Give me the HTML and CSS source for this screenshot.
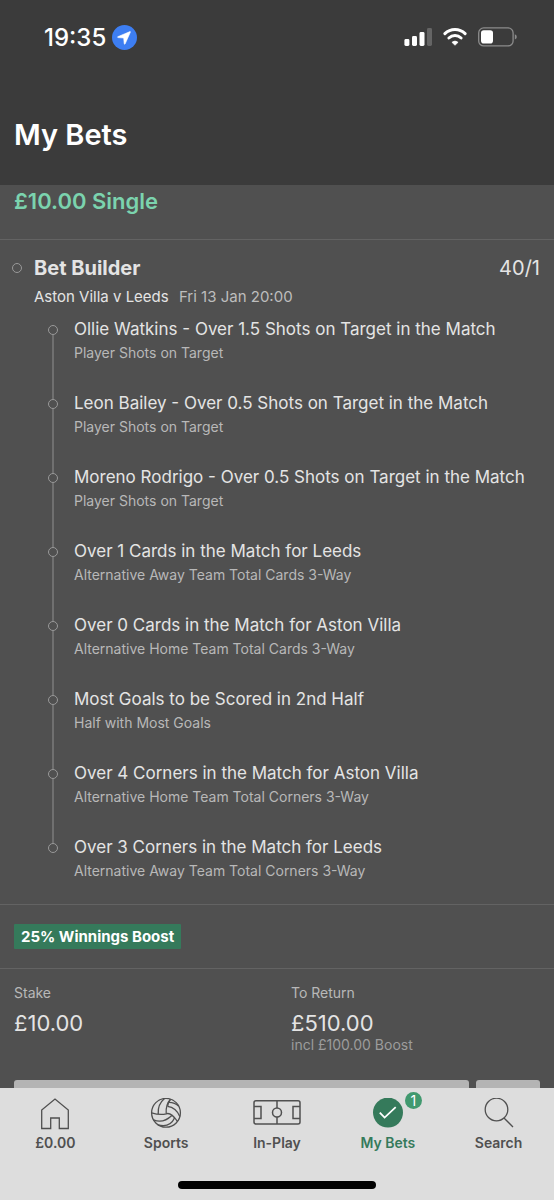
FILE: index.html
```html
<!DOCTYPE html>
<html lang="en">
<head>
    <meta charset="UTF-8">
    <meta name="viewport" content="width=device-width, initial-scale=1.0">
    <title>My Bets</title>
    <link rel="stylesheet" href="styles.css">
</head>
<body>
    <header class="header">
        <div class="status-bar">
            <div class="status-left">
                <span class="clock">19:35</span>
                <svg class="location" width="25" height="25" viewBox="0 0 25 25">
                    <circle cx="12.5" cy="12.5" r="12.5" fill="#3d7ef2"/>
                    <path d="M18 6.6 L5.8 11.7 Q5.2 12.3 6 12.6 L11.7 13 L12.2 18.8 Q12.6 19.6 13.1 18.9 L18.4 7.1 Q18.5 6.5 18 6.6 Z" fill="#fff" stroke="#fff" stroke-width="0.6"/>
                </svg>
            </div>
            <div class="status-right">
                <svg width="28" height="18" viewBox="0 0 28 18" fill="#fff">
                    <rect x="0.4" y="11" width="5" height="7" rx="1.4"/>
                    <rect x="8" y="8" width="5" height="10" rx="1.4"/>
                    <rect x="15.500" y="4" width="5" height="14" rx="1.4"/>
                    <rect x="23" y="0" width="5" height="18" rx="1.4" fill="#656565"/>
                </svg>
                <svg width="24" height="18" viewBox="0 0 24 18">
                    <path d="M1.9 5.600 A14.500 14.500 0 0 1 22.1 5.600" fill="none" stroke="#fff" stroke-width="3" stroke-linecap="round"/>
                    <path d="M5.900 10 A9 9 0 0 1 18.100 10" fill="none" stroke="#fff" stroke-width="3" stroke-linecap="round"/>
                    <path d="M12 17.300 L8.900 14.300 A4.800 4.800 0 0 1 15.100 14.300 Z" fill="#fff" stroke="#fff" stroke-width="0.600" stroke-linejoin="round"/>
                </svg>
                <svg width="39" height="20" viewBox="0 0 39 20">
                    <rect x="0.7" y="0.9" width="34.4" height="18" rx="5" fill="none" stroke="#8c8c8c" stroke-width="1.3"/>
                    <path d="M36.8 7.2 Q38.8 8 38.8 9.9 Q38.8 11.8 36.8 12.6 Z" fill="#8c8c8c"/>
                    <rect x="3" y="3.3" width="12" height="13.2" rx="2.8" fill="#fff"/>
                </svg>
            </div>
        </div>
        <h1 class="page-title">My Bets</h1>
    </header>

    <main class="content">
        <h2 class="bet-type">£10.00 Single</h2>

        <section class="selection">
            <div class="selection-head">
                <span class="marker"></span>
                <h3 class="selection-name">Bet Builder</h3>
                <span class="odds">40/1</span>
            </div>
            <p class="fixture">Aston Villa v Leeds <span class="kickoff">Fri 13 Jan 20:00</span></p>
            <ul class="legs">
                <li class="leg">
                    <p class="leg-name">Ollie Watkins - Over 1.5 Shots on Target in the Match</p>
                    <p class="leg-market">Player Shots on Target</p>
                </li>
                <li class="leg">
                    <p class="leg-name">Leon Bailey - Over 0.5 Shots on Target in the Match</p>
                    <p class="leg-market">Player Shots on Target</p>
                </li>
                <li class="leg">
                    <p class="leg-name">Moreno Rodrigo - Over 0.5 Shots on Target in the Match</p>
                    <p class="leg-market">Player Shots on Target</p>
                </li>
                <li class="leg">
                    <p class="leg-name">Over 1 Cards in the Match for Leeds</p>
                    <p class="leg-market">Alternative Away Team Total Cards 3-Way</p>
                </li>
                <li class="leg">
                    <p class="leg-name">Over 0 Cards in the Match for Aston Villa</p>
                    <p class="leg-market">Alternative Home Team Total Cards 3-Way</p>
                </li>
                <li class="leg">
                    <p class="leg-name">Most Goals to be Scored in 2nd Half</p>
                    <p class="leg-market">Half with Most Goals</p>
                </li>
                <li class="leg">
                    <p class="leg-name">Over 4 Corners in the Match for Aston Villa</p>
                    <p class="leg-market">Alternative Home Team Total Corners 3-Way</p>
                </li>
                <li class="leg">
                    <p class="leg-name">Over 3 Corners in the Match for Leeds</p>
                    <p class="leg-market">Alternative Away Team Total Corners 3-Way</p>
                </li>
            </ul>
        </section>

        <section class="boost">
            <span class="boost-badge">25% Winnings Boost</span>
        </section>

        <section class="totals">
            <div class="total">
                <p class="total-label">Stake</p>
                <p class="total-value">£10.00</p>
            </div>
            <div class="total">
                <p class="total-label">To Return</p>
                <p class="total-value">£510.00</p>
                <p class="total-note">incl £100.00 Boost</p>
            </div>
        </section>

        <div class="actions">
            <button type="button" class="action action-main" aria-label="Cash out"></button>
            <button type="button" class="action action-side" aria-label="Options"></button>
        </div>
    </main>

    <footer class="footer">
        <nav class="nav">
            <a class="nav-item" href="#">
                <svg class="nav-icon" width="32" height="32" viewBox="0 0 32 32" fill="none" stroke="#505050" stroke-width="1.3">
                    <path d="M2.7 30.500 V12 L16 1 L29.3 12 V30.500 H20.3 V20 H11.7 V30.500 Z"/>
                </svg>
                <span>£0.00</span>
            </a>
            <a class="nav-item" href="#">
                <svg class="nav-icon" width="32" height="32" viewBox="0 0 32 32" fill="none" stroke="#505050" stroke-width="1.3">
                    <circle cx="16" cy="14.800" r="14.4"/>
                    <path d="M16.200 15.800 Q15.500 6.500 20.500 1.200"/>
                    <path d="M8.200 16 Q7.500 6.500 14.500 0.600"/>
                    <path d="M1.600 14.800 Q10 17.500 16.200 15.800 Q21 14 27.500 23.500"/>
                    <path d="M17.600 8.400 Q26 9.500 29.800 18.500"/>
                    <path d="M20.500 1.200 Q18 4.500 17.600 8.400"/>
                    <path d="M19 4.300 Q25 4.500 28.500 8"/>
                    <path d="M3.500 21.800 Q13 26 21.800 17.500"/>
                    <path d="M8 26.800 Q20 30 24.500 20"/>
                </svg>
                <span>Sports</span>
            </a>
            <a class="nav-item" href="#">
                <svg class="nav-icon" width="48" height="32" viewBox="0 0 48 32" fill="none" stroke="#505050" stroke-width="1.5">
                    <rect x="1" y="2.800" width="46" height="23.300" rx="2"/>
                    <path d="M1 8.600 H8 V20.500 H1 M47 8.600 H40 V20.500 H47 M24 2.800 V10 M24 19 V26"/>
                    <circle cx="24" cy="14.500" r="4.500"/>
                </svg>
                <span>In-Play</span>
            </a>
            <a class="nav-item nav-item-active" href="#">
                <svg class="nav-icon" width="32" height="32" viewBox="0 0 32 32" fill="none">
                    <circle cx="16" cy="14.600" r="15" fill="#357a5b"/>
                    <path d="M7.800 14.600 L12.600 19.600 L23.700 9.200" stroke="#fff" stroke-width="1.800"/>
                </svg>
                <span class="nav-count">1</span>
                <span>My Bets</span>
            </a>
            <a class="nav-item" href="#">
                <svg class="nav-icon" width="32" height="32" viewBox="0 0 32 32" fill="none" stroke="#505050" stroke-width="1.3">
                    <circle cx="13.500" cy="11.500" r="11.300"/>
                    <path d="M21 20 L30 29"/>
                </svg>
                <span>Search</span>
            </a>
        </nav>
        <div class="home-indicator"></div>
    </footer>
</body>
</html>
```
FILE: styles.css
```css
*,
*::before,
*::after {
    box-sizing: border-box;
    margin: 0;
    padding: 0;
}

body {
    display: flex;
    flex-direction: column;
    height: 100vh;
    font-family: Inter, "Liberation Sans", sans-serif;
    background-color: #505050;
    color: #e4e4e4;
}

.header {
    flex: none;
    padding: 24px 14px 30px;
    background-color: #3b3b3b;
}

.status-bar {
    display: flex;
    justify-content: space-between;
    align-items: center;
    height: 26px;
    padding: 0 23px 0 30px;
    margin-bottom: 65px;
}

.status-left {
    display: flex;
    align-items: center;
    gap: 6px;
}

.clock {
    font-size: 24px;
    font-weight: 500;
    color: #fff;
}

.status-right {
    display: flex;
    align-items: center;
    gap: 11px;
}

.page-title {
    font-size: 29px;
    line-height: 40px;
    font-weight: 600;
    color: #fff;
}

.content {
    flex: 1;
    min-height: 0;
    overflow-y: auto;
    scrollbar-width: none;
}

.bet-type {
    padding: 4px 14px 26px;
    font-size: 22px;
    line-height: 24px;
    font-weight: 600;
    color: #7bd3ae;
}

/* selection */
.selection {
    padding: 16px 14px 21px;
    border-top: 1px solid #636363;
}

.selection-head {
    display: flex;
    align-items: center;
    line-height: 24px;
}

.marker {
    width: 10px;
    height: 10px;
    margin: 0 12px 0 -2px;
    border: 1px solid #999;
    border-radius: 50%;
}

.selection-name {
    flex: 1;
    font-size: 20px;
    font-weight: 700;
}

.odds {
    font-size: 20px;
}

.fixture {
    padding: 5px 0 8px 20px;
    font-size: 15px;
    line-height: 24px;
}

.kickoff {
    margin-left: 6px;
    color: #bdbdbd;
}

.legs {
    list-style: none;
    padding-left: 34px;
}

.leg {
    position: relative;
    padding: 0 0 26px 26px;
}

.leg:last-child {
    padding-bottom: 0;
}

/* circle and connecting line */
.leg::before {
    content: "";
    position: absolute;
    left: 0;
    top: 8px;
    width: 10px;
    height: 10px;
    border: 1px solid #999;
    border-radius: 50%;
}

.leg:not(:last-child)::after {
    content: "";
    position: absolute;
    left: 4px;
    top: 18px;
    bottom: -8px;
    width: 2px;
    background-color: #707070;
}

.leg-name {
    font-size: 17px;
    line-height: 24px;
}

.leg-market {
    font-size: 14px;
    line-height: 24px;
    color: #b8b8b8;
}

/* boost */
.boost {
    display: flex;
    padding: 19px 14px;
    border-top: 1px solid #636363;
}

.boost-badge {
    padding: 0 7px;
    font-size: 15px;
    line-height: 25px;
    font-weight: 700;
    color: #fff;
    background-color: #357a5b;
    border-radius: 1px;
}

/* stake and return */
.totals {
    display: flex;
    padding-top: 12px;
    border-top: 1px solid #636363;
}

.total {
    flex: 1;
    padding-left: 14px;
}

.total-label {
    margin-bottom: 4px;
    font-size: 14px;
    line-height: 24px;
    color: #b8b8b8;
}

.total-value {
    font-size: 22px;
    line-height: 28px;
}

.total-note {
    font-size: 14px;
    line-height: 16px;
    color: #9c9c9c;
}

.actions {
    display: flex;
    gap: 7px;
    padding: 27px 14px 16px;
}

.action {
    height: 48px;
    border: none;
    border-radius: 3px;
    background-color: #b4b4b4;
    cursor: pointer;
}

.action-main {
    flex: 1;
}

.action-side {
    width: 64px;
}

/* bottom navigation */
.footer {
    flex: none;
    padding-bottom: 11px;
    background-color: #dddddd;
}

.nav {
    display: flex;
    padding: 10px 0 26px;
}

.nav-item {
    position: relative;
    flex: 1;
    display: flex;
    flex-direction: column;
    align-items: center;
    font-size: 14px;
    line-height: 24px;
    font-weight: 600;
    color: #505050;
    text-decoration: none;
}

.nav-icon {
    display: block;
    margin-bottom: 1px;
}

.nav-item-active {
    color: #357a5b;
}

.nav-count {
    position: absolute;
    top: -6px;
    left: 50%;
    width: 17px;
    height: 17px;
    margin-left: 17px;
    border-radius: 50%;
    background-color: #41996f;
    color: #fff;
    font-size: 14px;
    line-height: 17px;
    font-weight: 400;
    text-align: center;
}

.home-indicator {
    width: 198px;
    height: 8px;
    margin: 0 auto;
    border-radius: 4px;
    background-color: #000;
}
```
